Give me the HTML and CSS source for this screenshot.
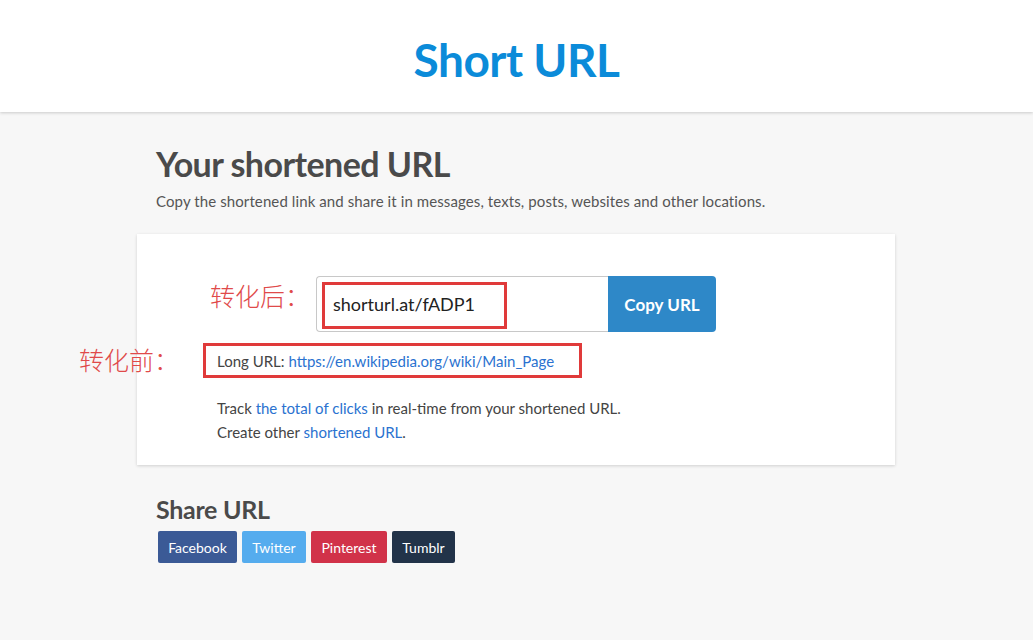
FILE: index.html
```html
<!DOCTYPE html>
<html>
<head>
<meta charset="utf-8">
<link rel="stylesheet" href="styles.css">
</head>
<body>
<header class="topbar">
  <h1 class="logo">Short URL</h1>
</header>
<main class="wrap">
  <section class="intro">
    <h2 class="title">Your shortened URL</h2>
    <p class="lead">Copy the shortened link and share it in messages, texts, posts, websites and other locations.</p>
  </section>
  <section class="card">
    <div class="copyrow">
      <span class="note note-after">转化后：</span>
      <div class="field">
        <span class="fieldtext">shorturl.at/fADP1</span>
        <span class="mark mark-field"></span>
      </div>
      <button class="copybtn">Copy URL</button>
    </div>
    <div class="longrow">
      <span class="note note-before">转化前：</span>
      <span class="mark mark-long"></span>
      <p class="longurl">Long URL: <a href="#">https://en.wikipedia.org/wiki/Main_Page</a></p>
    </div>
    <p class="info">Track <a href="#">the total of clicks</a> in real-time from your shortened URL.<br>Create other <a href="#">shortened URL</a>.</p>
  </section>
  <section class="share">
    <h3 class="sharetitle">Share URL</h3>
    <div class="btns">
      <a class="sbtn fb" href="#">Facebook</a>
      <a class="sbtn tw" href="#">Twitter</a>
      <a class="sbtn pi" href="#">Pinterest</a>
      <a class="sbtn tu" href="#">Tumblr</a>
    </div>
  </section>
</main>
</body>
</html>
```
FILE: styles.css
```css
* { box-sizing: border-box; }
html, body { margin: 0; padding: 0; }
body {
  background: #f7f7f7;
  font-family: "Lato", "Liberation Sans", sans-serif;
  color: #444;
  height: 640px;
  overflow: hidden;
}
a { color: #2a72d0; text-decoration: none; }

.topbar {
  height: 112px;
  background: #fff;
  box-shadow: 0 1px 3px rgba(0,0,0,0.18);
  display: flex;
  justify-content: center;
  align-items: flex-start;
}
.logo {
  margin: 28px 0 0;
  font-size: 46px;
  font-weight: 700;
  color: #0b8bd9;
  letter-spacing: -0.5px;
  line-height: 64px;
}

.wrap {
  width: 759px;
  margin: 0 auto;
}
.intro { padding: 31px 19px 0; }
.title {
  margin: 0;
  font-size: 34px;
  font-weight: 700;
  color: #4a4a4a;
  line-height: 42px;
  letter-spacing: -0.55px;
}
.lead {
  margin: 5px 0 0;
  font-size: 15px;
  color: #555;
  line-height: 22px;
  letter-spacing: 0.1px;
}

.card {
  margin-top: 22px;
  background: #fff;
  box-shadow: 0 1px 3px rgba(0,0,0,0.16);
  padding: 42px 0 22px 80px;
  position: relative;
  height: 231px;
  width: 758px;
}
.copyrow {
  display: flex;
  justify-content: center;
  margin-left: -80px;
  position: relative;
}
.field {
  width: 292px;
  height: 56px;
  border: 1px solid #c8c8c8;
  border-right: none;
  border-radius: 4px 0 0 4px;
  display: flex;
  align-items: center;
  padding-left: 16px;
  position: relative;
}
.fieldtext {
  font-size: 18px;
  color: #222;
}
.copybtn {
  width: 108px;
  height: 56px;
  border: none;
  background: #2e88c8;
  color: #fff;
  font-family: "Lato", sans-serif;
  font-weight: 700;
  font-size: 17px;
  border-radius: 0 4px 4px 0;
  padding: 0;
}
.mark {
  position: absolute;
  border: 3px solid #e03a3a;
  pointer-events: none;
}
.mark-field { left: 5px; top: 5px; width: 185px; height: 47px; }
.note {
  position: absolute;
  font-family: "Noto Sans CJK SC", sans-serif;
  font-weight: 300;
  color: #e04a4a;
  font-size: 25px;
  line-height: 30px;
}
.note-after { left: 73px; top: 4px; }
.longrow {
  position: relative;
  margin-top: 11px;
  height: 34px;
  display: flex;
  align-items: center;
}
.mark-long { left: -14px; top: 0; width: 379px; height: 35px; }
.note-before { left: -138px; top: 1px; }
.longurl {
  margin: 1px 0 0;
  font-size: 15px;
  color: #444;
}
.info {
  margin: 19px 0 0;
  font-size: 15px;
  line-height: 24px;
  color: #444;
}

.share { padding: 29px 19px 0; }
.sharetitle {
  margin: 0;
  font-size: 25px;
  font-weight: 700;
  color: #4a4a4a;
  line-height: 30px;
  letter-spacing: -0.3px;
}
.btns {
  display: flex;
  gap: 5px;
  margin-top: 7px;
  padding-left: 2px;
}
.sbtn {
  height: 32px;
  display: flex;
  align-items: center;
  justify-content: center;
  color: #fff;
  font-size: 14px;
  border-radius: 2px;
  padding: 0 10px;
}
.fb { background: #3b5a96; width: 79px; }
.tw { background: #55acee; width: 64px; }
.pi { background: #d13249; width: 76px; }
.tu { background: #223349; width: 63px; }
```
